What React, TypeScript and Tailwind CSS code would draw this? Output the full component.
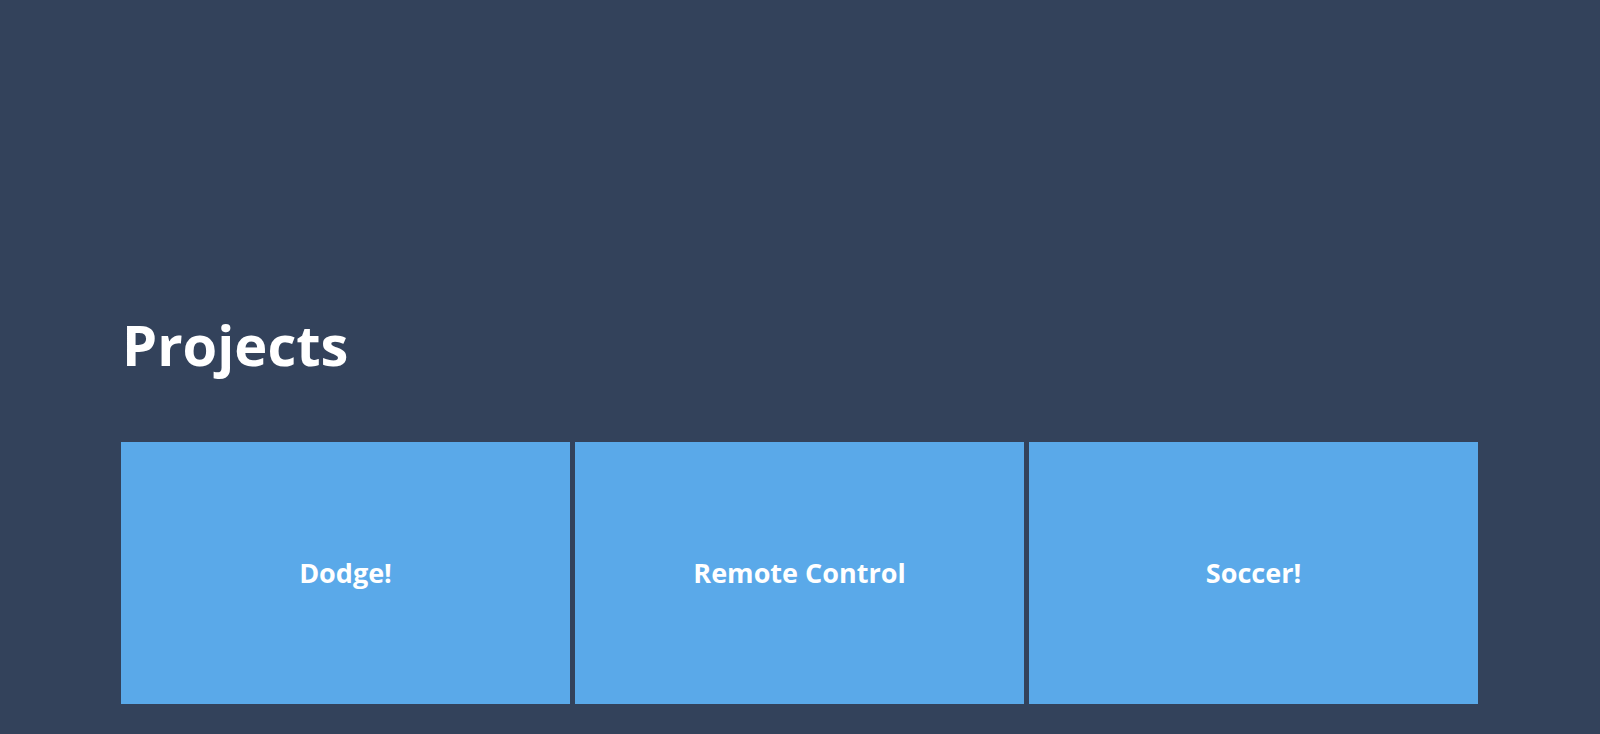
export default function App() {
  const projects = ["Dodge!", "Remote Control", "Soccer!"]

  return (
    <div
      className="min-h-[734px] w-full bg-[#33425b] text-white"
      style={{ fontFamily: '"Open Sans", sans-serif' }}
    >
      <div className="pl-[121px] pr-[122px] pt-[301px]">
        {/* Title */}
        <h1 className="text-[56px] font-bold leading-[86px] pl-[1px]">Projects</h1>

        {/* Project cards */}
        <div className="mt-[55px] grid grid-cols-3 gap-[5px]">
          {projects.map((name) => (
            <div
              key={name}
              className="h-[262px] bg-[#5aa9e9] flex items-center justify-center"
            >
              <span className="text-[27px] font-bold">{name}</span>
            </div>
          ))}
        </div>
      </div>
    </div>
  )
}
